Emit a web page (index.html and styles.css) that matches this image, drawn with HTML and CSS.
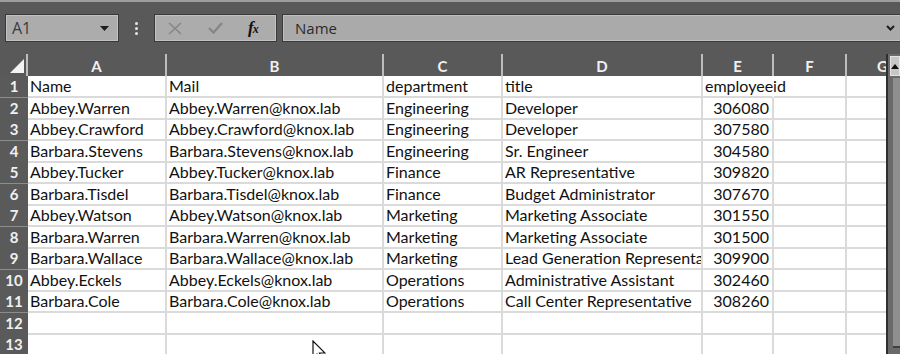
FILE: index.html
```html
<!DOCTYPE html>
<html>
<head>
<meta charset="utf-8">
<link rel="stylesheet" href="styles.css">
</head>
<body>
<div class="app">
  <div class="fbar">
    <div class="namebox">
      <span class="nb-text">A1</span>
      <svg class="nb-caret" width="9" height="5" viewBox="0 0 9 5"><path d="M0 0 L9 0 L4.5 5 Z" fill="#1e1e1e"/></svg>
    </div>
    <div class="dots"><i></i><i></i><i></i></div>
    <div class="fxbox">
      <svg class="fx-icon" width="14" height="13" viewBox="0 0 14 13"><path d="M1 1 L13 12 M13 1 L1 12" stroke="#868686" stroke-width="1.6" fill="none"/></svg>
      <svg class="fx-icon" width="15" height="12" viewBox="0 0 15 12"><path d="M1 6 L5.5 10.5 L14 1" stroke="#868686" stroke-width="2.4" fill="none"/></svg>
      <span class="fx-text">f<span class="fx-sub">x</span></span>
    </div>
    <div class="finput">
      <span class="fi-text">Name</span>
      <svg class="fi-chev" width="9" height="6" viewBox="0 0 9 6"><path d="M1 1 L4.5 4.5 L8 1" stroke="#1e1e1e" stroke-width="2" fill="none"/></svg>
    </div>
  </div>

  <div class="workarea">
    <div class="sheet">
      <div class="row hdr">
        <div class="corner"><svg width="16" height="16" viewBox="0 0 16 16"><path d="M15 1 L15 15 L1 15 Z" fill="#f4f4f4"/></svg></div>
        <div class="ch">A</div><div class="ch">B</div><div class="ch">C</div><div class="ch">D</div><div class="ch">E</div><div class="ch">F</div><div class="ch">G</div>
      </div>
      <div class="row"><div class="rh">1</div><div class="c">Name</div><div class="c">Mail</div><div class="c">department</div><div class="c">title</div><div class="c ov">employeeid</div><div class="c"></div><div class="c"></div></div>
      <div class="row"><div class="rh">2</div><div class="c">Abbey.Warren</div><div class="c">Abbey.Warren@knox.lab</div><div class="c">Engineering</div><div class="c">Developer</div><div class="c n">306080</div><div class="c"></div><div class="c"></div></div>
      <div class="row"><div class="rh">3</div><div class="c">Abbey.Crawford</div><div class="c">Abbey.Crawford@knox.lab</div><div class="c">Engineering</div><div class="c">Developer</div><div class="c n">307580</div><div class="c"></div><div class="c"></div></div>
      <div class="row"><div class="rh">4</div><div class="c">Barbara.Stevens</div><div class="c">Barbara.Stevens@knox.lab</div><div class="c">Engineering</div><div class="c">Sr. Engineer</div><div class="c n">304580</div><div class="c"></div><div class="c"></div></div>
      <div class="row"><div class="rh">5</div><div class="c">Abbey.Tucker</div><div class="c">Abbey.Tucker@knox.lab</div><div class="c">Finance</div><div class="c">AR Representative</div><div class="c n">309820</div><div class="c"></div><div class="c"></div></div>
      <div class="row"><div class="rh">6</div><div class="c">Barbara.Tisdel</div><div class="c">Barbara.Tisdel@knox.lab</div><div class="c">Finance</div><div class="c">Budget Administrator</div><div class="c n">307670</div><div class="c"></div><div class="c"></div></div>
      <div class="row"><div class="rh">7</div><div class="c">Abbey.Watson</div><div class="c">Abbey.Watson@knox.lab</div><div class="c">Marketing</div><div class="c">Marketing Associate</div><div class="c n">301550</div><div class="c"></div><div class="c"></div></div>
      <div class="row"><div class="rh">8</div><div class="c">Barbara.Warren</div><div class="c">Barbara.Warren@knox.lab</div><div class="c">Marketing</div><div class="c">Marketing Associate</div><div class="c n">301500</div><div class="c"></div><div class="c"></div></div>
      <div class="row"><div class="rh">9</div><div class="c">Barbara.Wallace</div><div class="c">Barbara.Wallace@knox.lab</div><div class="c">Marketing</div><div class="c">Lead Generation Representative</div><div class="c n">309900</div><div class="c"></div><div class="c"></div></div>
      <div class="row"><div class="rh">10</div><div class="c">Abbey.Eckels</div><div class="c">Abbey.Eckels@knox.lab</div><div class="c">Operations</div><div class="c">Administrative Assistant</div><div class="c n">302460</div><div class="c"></div><div class="c"></div></div>
      <div class="row"><div class="rh">11</div><div class="c">Barbara.Cole</div><div class="c">Barbara.Cole@knox.lab</div><div class="c">Operations</div><div class="c">Call Center Representative</div><div class="c n">308260</div><div class="c"></div><div class="c"></div></div>
      <div class="row"><div class="rh">12</div><div class="c"></div><div class="c"></div><div class="c"></div><div class="c"></div><div class="c"></div><div class="c"></div><div class="c"></div></div>
      <div class="row"><div class="rh">13</div><div class="c"></div><div class="c"></div><div class="c"></div><div class="c"></div><div class="c"></div><div class="c"></div><div class="c"></div></div>
    </div>
    <div class="vscroll">
      <div class="vs-up"><svg width="8" height="5" viewBox="0 0 8 5"><path d="M0 5 L4 0 L8 5 Z" fill="#111"/></svg></div>
      <div class="vs-track"><div class="vs-thumb"></div></div>
    </div>
  </div>

  <svg class="cursor" width="14" height="22" viewBox="0 0 14 22"><path d="M1 1 L1 18 L5 14 L8 21 L10.5 20 L7.5 13 L13 13 Z" fill="#fff" stroke="#111" stroke-width="1.2" stroke-linejoin="miter"/></svg>
</div>
</body>
</html>
```

FILE: styles.css
```css
html, body {
  margin: 0;
  padding: 0;
}
body {
  width: 900px;
  height: 354px;
  overflow: hidden;
  background: #585858;
  font-family: Lato, "Liberation Sans", sans-serif;
}
.app {
  position: relative;
  width: 900px;
  height: 354px;
  overflow: hidden;
  border-top: 2px solid #9e9e9e;
  box-sizing: border-box;
  background: #595959;
}

/* formula bar */
.fbar {
  display: flex;
  align-items: center;
  height: 28px;
  margin-top: 12px;
  padding-left: 5px;
}
.namebox {
  width: 114px;
  height: 28px;
  box-sizing: border-box;
  background: #acacac;
  border: 1px solid #3a3a3a;
  box-shadow: inset 0 0 0 1px #c2c2c2;
  display: flex;
  align-items: center;
  justify-content: space-between;
  padding: 0 9px 0 6px;
}
.nb-text {
  font-family: "Open Sans", "Liberation Sans", sans-serif;
  font-size: 16px;
  color: #3b3b3b;
}
.dots {
  width: 35px;
  display: flex;
  flex-direction: column;
  align-items: center;
  gap: 2px;
}
.dots i {
  display: block;
  width: 3px;
  height: 3px;
  border-radius: 50%;
  background: #e6e6e6;
}
.fxbox {
  width: 123px;
  height: 28px;
  box-sizing: border-box;
  background: #acacac;
  border: 1px solid #3a3a3a;
  box-shadow: inset 0 0 0 1px #c2c2c2;
  display: flex;
  align-items: center;
  padding-left: 13px;
}
.fx-icon:nth-child(1) {
  margin-right: 26px;
}
.fx-icon:nth-child(2) {
  margin-right: 25px;
}
.fx-text {
  font-family: "Liberation Serif", serif;
  font-style: italic;
  font-weight: bold;
  font-size: 17px;
  color: #111;
  letter-spacing: -1px;
}
.fx-sub {
  font-size: 12px;
}
.finput {
  margin-left: 5px;
  flex: 1;
  margin-right: -6px;
  height: 28px;
  box-sizing: border-box;
  background: #aaaaaa;
  border: 1px solid #3a3a3a;
  box-shadow: inset 0 0 0 1px #c0c0c0;
  display: flex;
  align-items: center;
  justify-content: space-between;
  padding: 0 10px 0 12px;
}
.fi-text {
  font-family: "Open Sans", "Liberation Sans", sans-serif;
  font-size: 15px;
  color: #2a2a2a;
}

/* sheet */
.workarea {
  display: flex;
  margin-top: 12px;
  height: 300px;
}
.sheet {
  width: 886px;
  overflow: hidden;
  flex: none;
}
.row {
  display: grid;
  grid-template-columns: 28px 139px 217px 119px 200px 71px 73px 73px;
  height: 21.5px;
  width: 920px;
  background: #fff;
}
.row.hdr {
  height: 22px;
  background: #595959;
}
.corner {
  display: flex;
  align-items: flex-end;
  justify-content: flex-end;
  padding: 0 1px 2px 0;
  border-right: 2px solid #bdbdbd;
  box-sizing: border-box;
}
.ch {
  color: #f0f0f0;
  font-weight: bold;
  font-size: 15px;
  text-align: center;
  line-height: 24px;
  border-right: 2px solid #bdbdbd;
  box-sizing: border-box;
  overflow: hidden;
}
.rh {
  background: #5a5a5a;
  color: #f0f0f0;
  font-weight: bold;
  font-size: 15px;
  text-align: center;
  line-height: 21px;
  border-bottom: 1px solid #8c8c8c;
  box-sizing: border-box;
}
.c {
  color: #111;
  font-size: 16px;
  line-height: 20px;
  padding: 0 2px;
  white-space: nowrap;
  overflow: hidden;
  border-right: 2px solid #dadada;
  border-bottom: 2px solid #dadada;
  box-sizing: border-box;
}
.c.n {
  text-align: right;
  padding-right: 3px;
}
.c.ov {
  overflow: visible;
  border-right-color: #fff;
}

/* vertical scrollbar */
.vscroll {
  flex: 1;
  border-left: 2px solid #2f2f2f;
  background: #6a6a6a;
  display: flex;
  flex-direction: column;
  padding-left: 2px;
}
.vs-up {
  height: 18px;
  margin-top: 2px;
  background: #c6c6c6;
  border: 1px solid #e4e4e4;
  display: flex;
  align-items: center;
  justify-content: center;
}
.vs-track {
  flex: 1;
  padding: 2px 0 6px 3px;
  display: flex;
}
.vs-thumb {
  flex: 1;
  background: #8f8f8f;
  border-bottom: 2px solid #3f3f3f;
}

/* mouse pointer overlay */
.cursor {
  position: absolute;
  left: 312px;
  top: 338px;
}
```
